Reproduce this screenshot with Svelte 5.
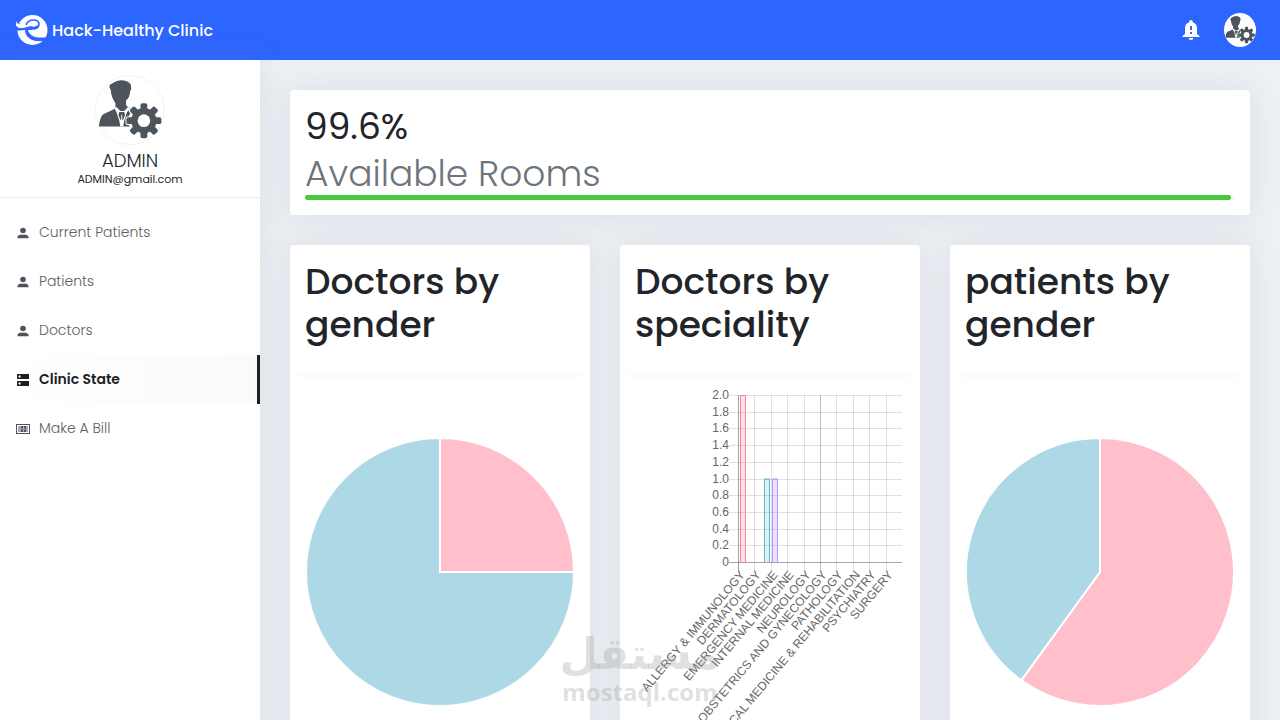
<script>
  const nav = [
    { label: 'Current Patients', icon: 'user' },
    { label: 'Patients', icon: 'user' },
    { label: 'Doctors', icon: 'user' },
    { label: 'Clinic State', icon: 'server', active: true },
    { label: 'Make A Bill', icon: 'bill' }
  ];

  const specialities = [
    'ALLERGY & IMMUNOLOGY',
    'DERMATOLOGY',
    'EMERGENCY MEDICINE',
    'INTERNAL MEDICINE',
    'NEUROLOGY',
    'OBSTETRICS AND GYNECOLOGY',
    'PATHOLOGY',
    'PHYSICAL MEDICINE & REHABILITATION',
    'PSYCHIATRY',
    'SURGERY'
  ];

  const ticks = ['2.0', '1.8', '1.6', '1.4', '1.2', '1.0', '0.8', '0.6', '0.4', '0.2', '0'];

  const bars = [
    { x: 105, value: 2, fill: 'rgba(255,99,132,.2)', stroke: '#f7869c' },
    { x: 129, value: 1, fill: 'rgba(75,192,192,.2)', stroke: '#5fb4d8' },
    { x: 137, value: 1, fill: 'rgba(153,102,255,.2)', stroke: '#b49bfa' }
  ];

  const teeth = [0, 45, 90, 135, 180, 225, 270, 315];

  const left = 103;
  const top = 8;
  const plotWidth = 164;
  const plotHeight = 167;
  const gridX = (i) => Math.round(left + (i * plotWidth) / 10) + 0.5;
  const gridY = (i) => Math.round(top + (i * plotHeight) / 10) + 0.5;

  // Wedge of a pie between two shares of the full turn, clockwise from twelve o'clock.
  function wedge(from, to) {
    const r = 134;
    const at = (s) => {
      const a = s * Math.PI * 2;
      return `${135 + r * Math.sin(a)} ${135 - r * Math.cos(a)}`;
    };
    return `M135 135L${at(from)}A${r} ${r} 0 ${to - from > 0.5 ? 1 : 0} 1 ${at(to)}Z`;
  }
</script>

{#snippet adminIcon()}
  <svg class="portrait" viewBox="0 0 70 70" aria-hidden="true">
    <g fill="#4d545b">
      <path d="M15 14q-3-4 1-6 8-5 14-3 6 2 6 5 1 3-1 6 0 6-4 9v5l3 3 6 2 4 17H3q1-11 5-13l11-5 1-2v-4q-4-5-5-14z" />
      <path d="M19 33l2 4 3 9 1 6h3l1-6 3-9 3-3-2-2-4 4h-4l-4-4z" fill="#fff" />
      <path d="M24 37h5l1 3-2 5h-1v-5h-1v5h-1l-2-5z" />
      <circle cx="49.300" cy="46" r="16" fill="#fff" />
      {#each teeth as angle}
        <rect
          x="45.800"
          y="28"
          width="7"
          height="12"
          rx="2"
          stroke="#fff"
          stroke-width="2"
          paint-order="stroke"
          transform="rotate({angle} 49.3 46)"
        />
      {/each}
      <circle cx="49.300" cy="46" r="13" />
      <circle cx="49.300" cy="46" r="6.500" fill="#fff" />
    </g>
  </svg>
{/snippet}

{#snippet pie(pink, label)}
  <svg class="chart" viewBox="0 0 270 270" role="img" aria-label={label}>
    <path d={wedge(0, pink)} fill="#ffc0cb" stroke="#fff" stroke-width="2" />
    <path d={wedge(pink, 1)} fill="#add8e6" stroke="#fff" stroke-width="2" />
  </svg>
{/snippet}

<header class="topbar">
  <a class="brand" href="#home">
    <svg viewBox="0 0 32 32" aria-hidden="true">
      <circle cx="16.500" cy="16" r="15" fill="#fff" />
      <path d="M0 13q5 2 11 0l4-1q3 2 7-1v3q-3 2-10 2 1 5 7 7 6 1 13 0v4H26q-9 1-13-3-4-3-4-8-4 1-9 0z" fill="#2d65ff" />
      <path d="M1.700 17.500q1.500 8 8 11.200 8 4 16-1.700-9 1-14-3.500-3-3-3.300-7.500-3.500.9-6.700 1.500z" fill="#fff" />
      <path d="M0 8q1 4 5 4t6-2q2-4 7-4 5 1 4 4-1 2-5 2l2-2-3-1q-2 1-4 3-7 3-12 0Q0 11 0 8z" fill="#fff" />
      <path d="M10 11q2-5 7-5 6 0 6 4 0 4-5 5" fill="none" stroke="#2d65ff" stroke-width="1.600" />
      <path d="M0 6h3l-1 2 2 2-2 1q-2-1-2-5z" fill="#2d65ff" />
      <path d="M0 7q1 3 4 3.500v1.500Q0 12 0 7z" fill="#fff" />
    </svg>
    <span>Hack-Healthy Clinic</span>
  </a>
  <div class="actions">
    <button aria-label="Notifications">
      <svg class="bell" viewBox="0 0 18 20" aria-hidden="true">
        <path
          fill="#fff"
          d="M9 0q2 0 2 2.500 4 1.200 4 6V14l2.500 2v1H.5v-1L3 14V8.500q0-4.800 4-6Q7 0 9 0zM6.500 18h5q-.5 2-2.500 2t-2.500-2z"
        />
        <path fill="#2d65ff" d="M8 6h2v4H8zm0 6h2v2H8z" />
      </svg>
    </button>
    <button class="account" aria-label="Account">{@render adminIcon()}</button>
  </div>
</header>

<div class="layout">
  <aside>
    <div class="profile">
      <div class="avatar">{@render adminIcon()}</div>
      <div class="name">ADMIN</div>
      <div class="email">ADMIN@gmail.com</div>
    </div>
    <nav>
      {#each nav as item}
        <a href="#{item.icon}" class:active={item.active}>
          <svg viewBox="0 0 14 14" aria-hidden="true">
            {#if item.icon === 'user'}
              <circle cx="7" cy="4.500" r="2.800" />
              <path d="M1.500 12.300v-1.300q0-2 3.500-2.600 2 .8 4 0 3.500.6 3.500 2.600v1.300z" />
            {:else if item.icon === 'server'}
              <path
                fill-rule="evenodd"
                d="M1 1h12v5H1zM1 8h12v5H1zM3.500 2.300a1.200 1.200 0 1 0 .1 0zM3.500 9.300a1.200 1.200 0 1 0 .1 0z"
              />
            {:else}
              <path
                fill-rule="evenodd"
                d="M0 2h14v10H0zM1 3v8h12V3z"
              />
              <path d="M2 4h10v6H2z" opacity="0.5" />
              <path d="M5 4h2v2.500H5zM8 4h2v2.500H8zM5 7.500h2V10H5zM8 7.500h2V10H8z" />
            {/if}
          </svg>
          {item.label}
        </a>
      {/each}
    </nav>
  </aside>

  <main>
    <section class="card rooms">
      <div class="rate">99.6%</div>
      <div class="caption">Available Rooms</div>
      <div class="track"><div class="fill" style="width: 99.6%"></div></div>
    </section>

    <div class="cards">
      <section class="card">
        <h2>Doctors by gender</h2>
        <div class="body">{@render pie(0.25, 'Doctors by gender')}</div>
      </section>

      <section class="card">
        <h2>Doctors by speciality</h2>
        <div class="body">
          <svg class="chart" viewBox="0 0 270 370" role="img" aria-label="Doctors by speciality">
            {#each ticks as tick, i}
              <line x1={left - 9} x2={left + plotWidth} y1={gridY(i)} y2={gridY(i)} class="grid" class:axis={i === 10} />
              <text x={left - 9} y={gridY(i) + 3} text-anchor="end">{tick}</text>
            {/each}
            {#each specialities as name, i}
              <line
                x1={gridX(i)}
                x2={gridX(i)}
                y1={top}
                y2={top + plotHeight + 10}
                class="grid"
                class:axis={i === 0}
                class:strong={i === 5}
              />
              <text text-anchor="end" transform="translate({gridX(i) + 7} {top + plotHeight + 13}) rotate(-50)">{name}</text>
            {/each}
            {#each bars as bar}
              {@const height = (plotHeight * bar.value) / 2}
              <rect x={bar.x} y={top + plotHeight - height} width="6" {height} fill={bar.fill} />
              <path
                d="M{bar.x + 0.5} {top + plotHeight}v{-height + 0.5}h5v{height - 0.5}"
                fill="none"
                stroke={bar.stroke}
              />
            {/each}
          </svg>
        </div>
      </section>

      <section class="card">
        <h2>patients by gender</h2>
        <div class="body">{@render pie(0.6, 'Patients by gender')}</div>
      </section>
    </div>
  </main>
</div>

<div class="watermark">
  <div class="arabic" lang="ar">مستقل</div>
  <div class="latin">mostaql.com</div>
</div>

<style>
  :global(body) {
    margin: 0;
    background: #edf0f4;
    color: #212529;
    font-family: Poppins, Inter, 'Open Sans', sans-serif;
  }

  .topbar {
    display: flex;
    align-items: center;
    justify-content: space-between;
    height: 60px;
    padding: 0 24px 0 16px;
    background: #2d65ff;
  }
  .brand {
    display: flex;
    align-items: center;
    gap: 4px;
    color: #fff;
    font-size: 16px;
    font-weight: 500;
    text-decoration: none;
  }
  .brand svg {
    width: 32px;
    height: 32px;
  }
  .actions {
    display: flex;
    align-items: center;
    gap: 24px;
  }
  button {
    display: flex;
    padding: 0;
    border: 0;
    background: none;
  }
  .bell {
    width: 18px;
    height: 20px;
  }
  .account {
    align-items: center;
    justify-content: center;
    width: 32px;
    height: 34px;
    border-radius: 50%;
    background: #fff;
    overflow: hidden;
  }
  .portrait {
    display: block;
    width: 100%;
    height: 100%;
  }

  .layout {
    display: flex;
    min-height: calc(100vh - 60px);
  }
  aside {
    flex: 0 0 260px;
    background: #fff;
    box-shadow: 0 0 30px rgba(115, 128, 157, 0.15);
  }
  .profile {
    display: flex;
    flex-direction: column;
    align-items: center;
    padding: 15px 0 11px;
    border-bottom: 1px solid #e9ecef;
  }
  .avatar {
    box-sizing: border-box;
    width: 70px;
    height: 70px;
    margin-bottom: 5px;
    border: 1px solid #f2f3f4;
    border-radius: 50%;
  }
  .name {
    font-size: 18px;
    font-weight: 300;
    line-height: 22px;
  }
  .email {
    font-size: 11px;
    font-weight: 400;
    line-height: 14px;
  }
  nav {
    padding-top: 10px;
  }
  nav a {
    display: flex;
    align-items: center;
    gap: 9px;
    height: 49px;
    padding-left: 16px;
    color: #5c6065;
    font-size: 14px;
    font-weight: 300;
    text-decoration: none;
  }
  nav svg {
    width: 14px;
    height: 14px;
    fill: #4d545b;
  }
  nav .active {
    border-right: 3px solid #1d1e22;
    background: linear-gradient(90deg, #fff, #fafafa);
    color: #1d1e22;
    font-weight: 600;
  }
  nav .active svg {
    fill: #1d1e22;
  }

  main {
    flex: 1;
    min-width: 0;
    padding: 30px;
  }
  .card {
    border-radius: 4px;
    background: #fff;
    box-shadow: 0 0 30px rgba(115, 128, 157, 0.15);
  }
  .rooms {
    margin-bottom: 30px;
    padding: 15px;
  }
  .rate {
    font-size: 36px;
    font-weight: 400;
    line-height: 43px;
  }
  .caption {
    padding-top: 4px;
    color: #6c757d;
    font-size: 36px;
    font-weight: 300;
    line-height: 43px;
  }
  .track {
    height: 5px;
    border-radius: 3px;
    background: #f8f9fa;
  }
  .fill {
    height: 5px;
    border-radius: 3px;
    background: #46c93a;
  }
  .cards {
    display: grid;
    grid-template-columns: repeat(3, minmax(0, 1fr));
    gap: 30px;
  }
  .cards .card {
    display: flex;
    flex-direction: column;
  }
  h2 {
    margin: 0;
    padding: 15px 15px 27px;
    box-shadow: 0 9px 10px -8px rgba(0, 0, 0, 0.04);
    clip-path: inset(0 0 -20px);
    font-size: 36px;
    font-weight: 500;
    line-height: 43px;
  }
  .body {
    display: flex;
    flex: 1;
    align-items: center;
    padding: 14px 15px;
  }
  .chart {
    display: block;
    width: 100%;
    overflow: visible;
  }
  .chart text {
    fill: #666;
    font: 12px 'Liberation Sans', Arial, sans-serif;
  }
  .grid {
    stroke: rgba(0, 0, 0, 0.12);
  }
  .strong {
    stroke: rgba(0, 0, 0, 0.25);
  }
  .axis {
    stroke: rgba(0, 0, 0, 0.35);
  }

  .watermark {
    position: fixed;
    bottom: 14px;
    left: 50%;
    transform: translateX(-50%);
    color: rgba(160, 160, 160, 0.32);
    font-weight: 700;
    text-align: center;
    pointer-events: none;
  }
  .arabic {
    font-family: 'DejaVu Sans', sans-serif;
    font-size: 44px;
    line-height: 48px;
  }
  .latin {
    font-family: 'Open Sans', sans-serif;
    font-size: 24px;
    line-height: 28px;
  }
</style>
